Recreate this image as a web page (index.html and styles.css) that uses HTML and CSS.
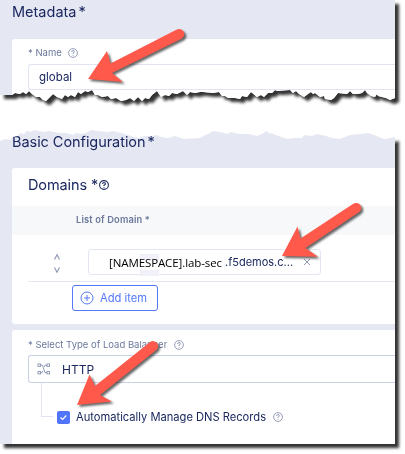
FILE: index.html
```
<!DOCTYPE html>
<html lang="en">
<head>
<meta charset="utf-8">
<title>Load balancer configuration</title>
<link rel="stylesheet" href="styles.css">
</head>
<body>
<svg class="defs" width="0" height="0">
  <symbol id="help" viewBox="0 0 10 10"><circle cx="5" cy="5" r="4.4"/><path d="M3.6 4 Q3.7 2.5 5 2.5 T6.4 3.9 Q6.3 4.6 5 5.2 V6 M5 7.1 V7.8"/></symbol>
</svg>
<main class="shot">
  <div class="shadow">
    <section class="panel panel-top">
      <h1 class="heading heading-meta">Metadata<span class="star">*</span></h1>
      <div class="card name-card">
        <div class="label">* Name <svg class="help name-help"><use href="#help"/></svg></div>
        <div class="input name-input">global</div>
      </div>
    </section>
  </div>
  <div class="shadow">
    <section class="panel panel-bottom">
      <h1 class="heading heading-basic">Basic Configuration<span class="star">*</span></h1>
      <div class="card domains">
        <h2 class="subheading">Domains *<svg class="help dark"><use href="#help"/></svg></h2>
        <div class="thead">List of Domain *</div>
        <div class="row">
          <svg class="sort" viewBox="0 0 8 22"><path d="M1.500 6.500L4 1.800L6.500 6.500M1.500 14.500L4 19.200L6.500 14.500"/></svg>
          <div class="domain">
            <i class="smudge smudge-a"></i><i class="smudge smudge-b"></i>
            <span class="namespace">[NAMESPACE].lab-sec</span>
            <span class="host">.f5demos.c...</span>
            <svg class="close" viewBox="0 0 8 8"><path d="M1 1L7 7M7 1L1 7"/></svg>
          </div>
        </div>
        <button class="add"><svg viewBox="0 0 14 14"><circle cx="7" cy="7" r="6"/><path d="M4 7H10M7 4V10"/></svg>Add item</button>
      </div>
      <div class="card balancer">
        <div class="label">* Select Type of Load Balancer <svg class="help balancer-help"><use href="#help"/></svg></div>
        <div class="input select"><svg class="nodes" viewBox="0 0 14 12"><rect x="1" y="1" width="2.600" height="2.400"/><rect x="10" y="1" width="2.600" height="2.400"/><rect x="1" y="8.500" width="2.600" height="2.400"/><rect x="10" y="8.500" width="2.600" height="2.400"/><path d="M3.600 2.200H5.500L8 9.700H10M3.600 9.700H5L5.800 7.800M7.300 4L8 2.200H10"/></svg>HTTP</div>
        <div class="child">
          <i class="branch"></i>
          <span class="check"><svg viewBox="0 0 13 13"><path d="M3.500 6.500L5.600 8.500L9.300 4.500"/></svg></span>
          <span class="dns">Automatically Manage DNS Records</span>
          <svg class="help dns-help"><use href="#help"/></svg>
        </div>
      </div>
    </section>
  </div>
  <svg class="arrows" viewBox="0 0 405 454">
    <path d="M88 79L107 51L110.500 63.500L176.800 29.500A4.900 4.900 0 0 1 181.500 38.700L112 73L123 82Z"/>
    <path d="M282 256L297.500 226.500L300.500 238.500L353.300 203.800A4.900 4.900 0 0 1 359 212.200L305.500 248L318 256.800Z"/>
    <path d="M77 405L89.500 374.500L95 386L149.800 342.300A4.900 4.900 0 0 1 156.300 350L100 395L112 401.500Z"/>
  </svg>
</main>
</body>
</html>
```
FILE: styles.css
```
* { box-sizing: border-box; }
body { margin: 0; background: #fff; font-family: Inter, sans-serif; color: #1b2860; }
.shot { position: relative; width: 405px; height: 454px; overflow: hidden; display: flex; flex-direction: column; gap: 28px; }
.defs { position: absolute; }
.shadow { width: 395px; filter: drop-shadow(4px 4px 1.600px rgba(0,0,0,.8)); }
.panel { background: #e5e8f3; padding-left: 12px; overflow: hidden; }
.panel-top { height: 102px; clip-path: polygon(0 0,395px 0,395px 98px,390px 100px,386px 98px,378px 96px,377px 94px,375px 97px,371px 96px,367px 93px,365px 90px,362px 93px,358px 94px,353px 94px,350px 91px,347px 94px,338px 93px,334px 98px,331px 100px,325px 99px,324px 96px,320px 97px,315px 93px,313px 94px,311px 92px,308px 94px,304px 97px,299px 94px,296px 91px,293px 93px,290px 90px,277px 91px,275px 90px,272px 93px,268px 93px,264px 97px,261px 95px,257px 97px,251px 92px,247px 97px,242px 96px,240px 99px,235px 98px,228px 98px,225px 96px,222px 96px,219px 92px,213px 93px,203px 92px,200px 92px,195px 93px,190px 92px,187px 95px,183px 91px,177px 94px,172px 93px,169px 96px,165px 95px,161px 97px,157px 91px,152px 95px,149px 99px,145px 98px,142px 101px,138px 97px,134px 101px,130px 98px,126px 100px,121px 101px,116px 98px,111px 99px,108px 96px,102px 97px,98px 95px,95px 95px,92px 90px,88px 92px,85px 91px,81px 94px,78px 92px,75px 97px,71px 95px,68px 97px,65px 95px,62px 99px,57px 97px,53px 94px,49px 98px,46px 101px,43px 100px,40px 97px,36px 97px,32px 94px,29px 91px,26px 94px,23px 92px,20px 94px,15px 93px,12px 95px,0 95px); }
.panel-bottom { height: 314px; clip-path: polygon(0 11px,5px 9px,10px 10px,13px 7px,18px 6px,20px 3px,24px 4px,27px 1px,31px 2px,34px 0,39px 1px,44px 2px,49px 1px,54px 2px,60px 3px,66px 3px,73px 5px,76px 3px,82px 4px,88px 2px,91px 0,98px 1px,107px 2px,113px 1px,121px 3px,128px 5px,133px 7px,139px 8px,145px 6px,151px 6px,157px 5px,160px 7px,168px 8px,175px 6px,183px 9px,200px 8px,205px 5px,208px 4px,213px 1px,220px 2px,227px 4px,231px 2px,239px 4px,249px 4px,257px 6px,262px 4px,267px 1px,270px 4px,276px 5px,283px 8px,288px 9px,293px 8px,301px 8px,305px 5px,312px 6px,317px 4px,326px 6px,331px 8px,340px 9px,345px 7px,350px 5px,360px 4px,368px 3px,374px 5px,379px 8px,385px 9px,390px 8px,395px 7px,395px 314px,0 314px); }
.heading, .subheading { margin: 0; font-weight: 400; font-size: 14.500px; line-height: 20px; white-space: nowrap; }
.heading-meta { padding-top: 2px; height: 39px; }
.heading-basic { padding-top: 2px; height: 38px; letter-spacing: -.05px; }
.star { margin-left: 2px; }
.card { background: #fff; border-radius: 3px 0 0 3px; padding-left: 16px; }
.name-card { height: 63px; padding-top: 7px; }
.label { height: 14px; display: flex; align-items: center; font-size: 9.500px; line-height: 14px; color: #6c789b; white-space: nowrap; }
.help { width: 10px; height: 10px; fill: none; stroke: #8a94b1; stroke-width: .9; flex: none; overflow: visible; }
.name-help { margin-left: 6px; }
.balancer-help { margin-left: 7px; }
.dns-help { margin-left: 7px; }
.input { border: 1px solid #dfe3f2; border-right: 0; border-radius: 3px 0 0 3px; display: flex; align-items: center; font-size: 12px; }
.name-input { margin-top: 4px; height: 26px; padding-left: 10px; font-size: 11.500px; }
.domains { height: 156px; }
.subheading { display: flex; align-items: center; height: 38px; padding-bottom: 5px; letter-spacing: -.1px; }
.dark { margin-left: 1px; stroke: #1b2860; stroke-width: 1.100; }
.thead { height: 29px; margin-left: -16px; padding-left: 64px; background: #f6f8fa; color: #6c789b; font-size: 9.300px; letter-spacing: .15px; font-weight: 600; line-height: 28px; }
.row { height: 47px; padding: 14px 0 0 25px; border-bottom: 1px solid #e3e6f3; display: flex; }
.sort { width: 8px; height: 22px; margin-top: 4px; fill: none; stroke: #929bb7; stroke-width: 1.200; }
.domain { position: relative; margin-left: 27px; width: 233px; height: 26px; border: 1px solid #e3e6f3; border-radius: 3px; display: flex; align-items: center; padding-left: 20px; font-size: 12px; white-space: nowrap; }
.smudge { position: absolute; left: 51px; width: 19px; height: 6px; background: #f1f2f9; }
.smudge-a { top: 4px; }
.smudge-b { top: 20px; }
.namespace { position: relative; flex: none; width: 116px; font: 11.500px "Open Sans", sans-serif; letter-spacing: -.1px; color: #000; }
.host { flex: none; width: 69px; font-size: 11px; }
.close { flex: none; width: 8px; height: 8px; margin-left: 9px; fill: none; stroke: #929bb7; stroke-width: 1; }
.add { margin: 3px 0 0 44px; width: 86px; height: 26px; padding: 0 0 0 7px; border: 1px solid #5479f7; border-radius: 3px; background: #fff; color: #5479f7; font: 11.200px Inter, sans-serif; display: flex; align-items: center; gap: 6px; white-space: nowrap; }
.add svg { width: 14px; height: 14px; fill: none; stroke: #5479f7; stroke-width: 1; }
.balancer { height: 116px; margin-top: 6px; padding-top: 8px; }
.select { height: 28px; margin-top: 3px; padding-left: 8px; border-color: #cbd1e5; }
.nodes { width: 14px; height: 12px; margin-right: 11px; fill: none; stroke: #8a94b1; stroke-width: .9; }
.child { display: flex; align-items: center; height: 68px; padding-left: 13px; }
.branch { align-self: flex-start; width: 12px; height: 34px; border: solid #dfe3f2; border-width: 0 0 1px 1px; }
.check { width: 13px; height: 13px; margin-left: 4px; border-radius: 2px; background: #5074fa; }
.check svg { display: block; fill: none; stroke: #fff; stroke-width: 1.200; }
.dns { margin-left: 6px; font-size: 11.150px; white-space: nowrap; }
.arrows { position: absolute; left: 0; top: 0; width: 405px; height: 454px; fill: #ff594b; filter: drop-shadow(2px 2px 1px rgba(0,0,0,.6)); }
```
